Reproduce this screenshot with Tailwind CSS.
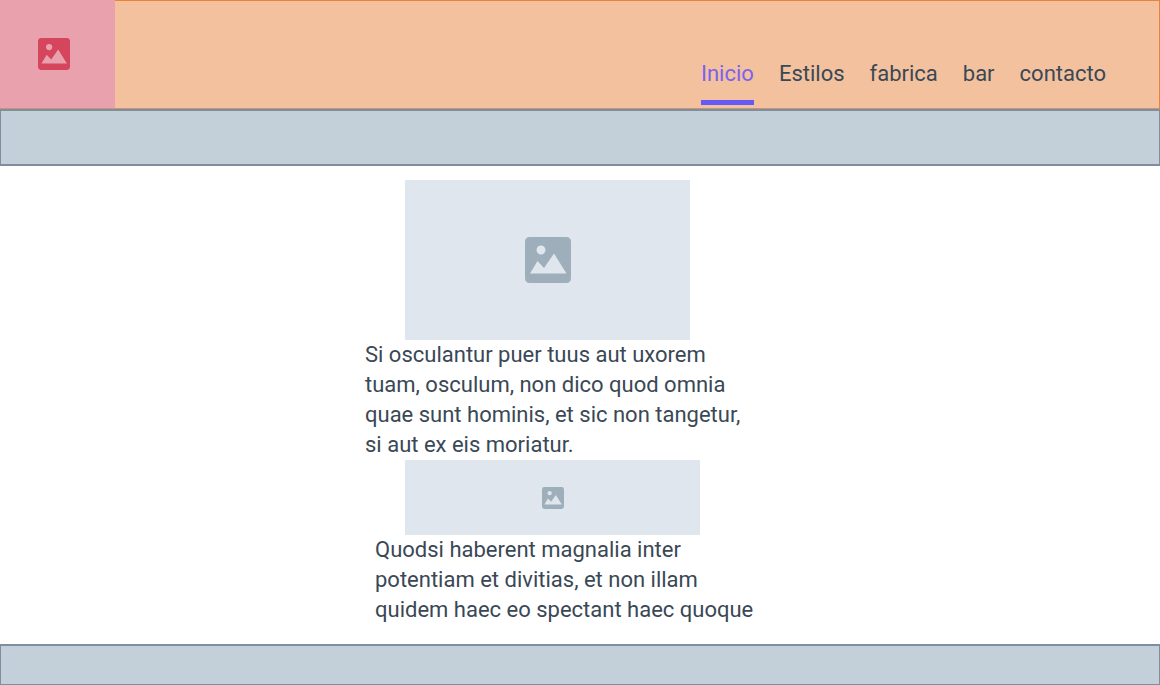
<!DOCTYPE html>
<html lang="es">
<head>
<meta charset="utf-8">
<meta name="viewport" content="width=device-width, initial-scale=1">
<title>Inicio</title>
<script src="https://cdn.jsdelivr.net/npm/@tailwindcss/browser@4"></script>
</head>
<body class="flex min-h-screen flex-col bg-white font-['Roboto',sans-serif] text-[22px] leading-[30px] text-[#3a4855]">
<svg class="hidden" aria-hidden="true">
  <symbol id="picture" viewBox="0 0 46 46">
    <path fill="currentColor" fill-rule="evenodd" d="M5 0H41Q46 0 46 5V41Q46 46 41 46H5Q0 46 0 41V5Q0 0 5 0ZM16 8.500A4.500 4.500 0 1 0 16 17.500A4.500 4.500 0 1 0 16 8.500ZM5 36.500H41.500L29 16.500L19 31L12.500 24Z"/>
  </symbol>
</svg>
<header class="flex h-[109px] border-t border-r border-b border-t-[#e8833a] border-r-[#e8833a] border-b-[#c9956f] bg-[#f4c19e]">
  <a href="#" aria-label="Logo" class="-mt-px flex w-[115px] shrink-0 items-center bg-[#e9a1ae] pl-[38px] text-[#d5455c]">
    <svg class="size-8"><use href="#picture"/></svg>
  </a>
  <nav class="flex flex-1 items-end justify-end gap-[25px] pr-[53px] pb-[3px]">
    <a href="#" aria-current="page" class="border-b-5 border-[#6558f5] pb-[11px] text-[#7a63ec]">Inicio</a>
    <a href="#" class="border-b-5 border-transparent pb-[11px]">Estilos</a>
    <a href="#" class="border-b-5 border-transparent pb-[11px]">fabrica</a>
    <a href="#" class="border-b-5 border-transparent pb-[11px]">bar</a>
    <a href="#" class="border-b-5 border-transparent pb-[11px]">contacto</a>
  </nav>
</header>
<div class="h-[57px] border border-t-2 border-b-2 border-[#7e8e9e] bg-[#c3cfd9]"></div>
<main class="flex-1 pt-[14px] pb-[19px]">
  <div class="mx-auto w-[430px]">
    <article>
      <div class="ml-10 flex h-40 w-[285px] items-center justify-center bg-[#dfe6ee] text-[#9eaeba]"><svg class="size-[46px]" role="img" aria-label="Imagen"><use href="#picture"/></svg></div>
      <p>Si osculantur puer tuus aut uxorem<br>tuam, osculum, non dico quod omnia<br>quae sunt hominis, et sic non tangetur,<br>si aut ex eis moriatur.</p>
    </article>
    <article>
      <div class="ml-10 flex h-[75px] w-[295px] items-center justify-center bg-[#dfe6ee] text-[#9eaeba]"><svg class="size-[22px]" role="img" aria-label="Imagen"><use href="#picture"/></svg></div>
      <p class="pl-[10px]">Quodsi haberent magnalia inter<br>potentiam et divitias, et non illam<br>quidem haec eo spectant haec quoque</p>
    </article>
  </div>
</main>
<footer class="h-[41px] border border-t-2 border-[#7e8e9e] bg-[#c3cfd9]"></footer>
</body>
</html>
